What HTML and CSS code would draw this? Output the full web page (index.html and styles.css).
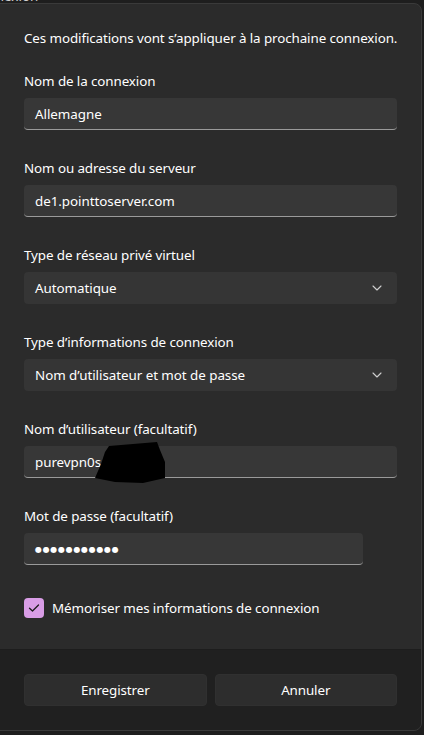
FILE: index.html
```html
<!DOCTYPE html>
<html lang="fr">
<head>
<meta charset="utf-8">
<link rel="stylesheet" href="styles.css">
</head>
<body>
<div class="titlestrip"><span class="wintitle">Modifier la connexion</span></div>
<div class="dialog">
  <div class="content">
    <p class="intro">Ces modifications vont s’appliquer à la prochaine connexion.</p>
    <div class="group">
      <label class="label">Nom de la connexion</label>
      <div class="field text">Allemagne</div>
    </div>
    <div class="group">
      <label class="label">Nom ou adresse du serveur</label>
      <div class="field text">de1.pointtoserver.com</div>
    </div>
    <div class="group">
      <label class="label">Type de réseau privé virtuel</label>
      <div class="field select"><span>Automatique</span>
        <svg class="chev" width="10" height="6" viewBox="0 0 10 6"><path d="M1 1 L5 5 L9 1" fill="none" stroke="#cfcfcf" stroke-width="1.1" stroke-linecap="round" stroke-linejoin="round"/></svg>
      </div>
    </div>
    <div class="group">
      <label class="label">Type d’informations de connexion</label>
      <div class="field select"><span>Nom d’utilisateur et mot de passe</span>
        <svg class="chev" width="10" height="6" viewBox="0 0 10 6"><path d="M1 1 L5 5 L9 1" fill="none" stroke="#cfcfcf" stroke-width="1.1" stroke-linecap="round" stroke-linejoin="round"/></svg>
      </div>
    </div>
    <div class="group">
      <label class="label">Nom d’utilisateur (facultatif)</label>
      <div class="field text user">purevpn0s
        <svg class="redact" width="72" height="42" viewBox="0 0 72 42"><path d="M14 4 L62 0 L65 8 L70 20 L70 36 L48 41 L20 40 L0 36 L6 22 L10 10 Z" fill="#000"/></svg>
      </div>
    </div>
    <div class="group last">
      <label class="label">Mot de passe (facultatif)</label>
      <div class="field text pass"><span class="dots">●●●●●●●●●●●</span></div>
    </div>
    <div class="check-row">
      <span class="checkbox">
        <svg width="12" height="10" viewBox="0 0 12 10"><path d="M1.5 5.2 L4.5 8 L10.5 2" fill="none" stroke="#1b1b1b" stroke-width="1.3" stroke-linecap="round" stroke-linejoin="round"/></svg>
      </span>
      <span class="check-label">Mémoriser mes informations de connexion</span>
    </div>
  </div>
  <div class="footer">
    <button class="btn">Enregistrer</button>
    <button class="btn">Annuler</button>
  </div>
</div>
</body>
</html>
```

FILE: styles.css
```css
html, body {
  margin: 0;
  padding: 0;
  background: #1e1e1e;
  height: 735px;
  overflow: hidden;
  font-family: "Noto Sans", "Open Sans", sans-serif;
  color: #ffffff;
}

.titlestrip {
  height: 3px;
  overflow: hidden;
}

.wintitle {
  display: block;
  margin-left: -98px;
  margin-top: -12px;
  font-size: 13.4px;
  line-height: 16px;
  color: #d0d0d0;
  white-space: nowrap;
}

.dialog {
  margin-left: -8px;
  width: 430px;
  height: 728px;
  box-sizing: border-box;
  background: #2b2b2b;
  border: 1px solid #3a3a3a;
  border-radius: 8px;
  display: flex;
  flex-direction: column;
  overflow: hidden;
}

.content {
  flex: 1;
  padding: 24px 24px 0 31px;
}

.intro {
  margin: 0 0 23px 0;
  font-size: 13.4px;
  line-height: 20px;
  letter-spacing: -0.1px;
  white-space: nowrap;
  color: #ffffff;
}

.group {
  display: flex;
  flex-direction: column;
  margin-bottom: 28px;
}

.group.last {
  margin-bottom: 33px;
}

.label {
  font-size: 13.4px;
  line-height: 20px;
  margin-bottom: 7px;
  letter-spacing: -0.1px;
  color: #ffffff;
}

.field {
  position: relative;
  width: 373px;
  height: 32px;
  box-sizing: border-box;
  background: #373737;
  border-radius: 4px;
  font-size: 13.4px;
  letter-spacing: -0.05px;
  display: flex;
  align-items: center;
  padding: 0 12px 0 11px;
  color: #ffffff;
}

.field.text {
  border-bottom: 1px solid #9a9a9a;
  padding-top: 1px;
}

.field.pass {
  width: 339px;
}

.dots {
  font-family: "DejaVu Sans", sans-serif;
  font-size: 8px;
  letter-spacing: 0.7px;
  color: #ffffff;
}

.field.select {
  justify-content: space-between;
  background: #353535;
  padding-right: 15px;
}

.chev {
  display: block;
}

.redact {
  position: absolute;
  left: 71px;
  top: -4px;
}

.check-row {
  display: flex;
  align-items: center;
  height: 20px;
}

.checkbox {
  width: 20px;
  height: 20px;
  border-radius: 4px;
  background: #d99de6;
  display: flex;
  align-items: center;
  justify-content: center;
  margin-right: 8px;
}

.checkbox svg {
  display: block;
}

.check-label {
  font-size: 13.4px;
  letter-spacing: -0.1px;
  color: #ffffff;
}

.footer {
  height: 81px;
  box-sizing: border-box;
  background: #202020;
  border-top: 1px solid #1d1d1d;
  padding: 24px 24px 0 31px;
  display: flex;
  gap: 8px;
}

.btn {
  width: 183px;
  height: 32px;
  background: #2d2d2d;
  border: 1px solid #303030;
  border-radius: 4px;
  color: #ffffff;
  font-family: "Noto Sans", "Open Sans", sans-serif;
  font-size: 13.4px;
  letter-spacing: -0.1px;
  padding: 0;
}
```
